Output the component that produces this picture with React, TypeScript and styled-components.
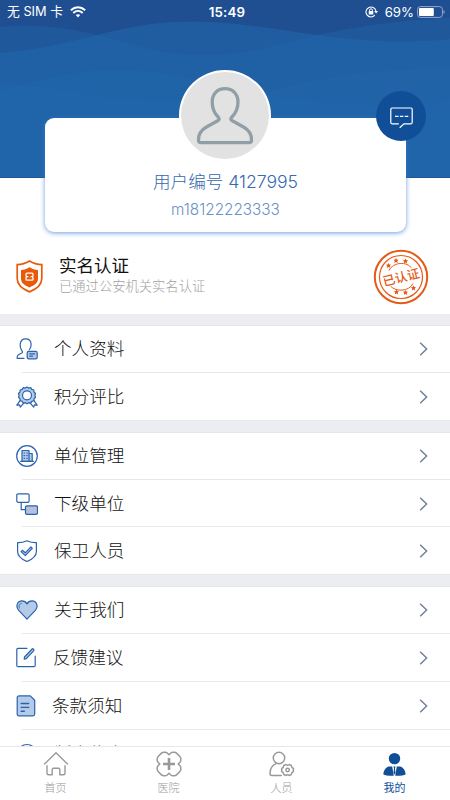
import React from 'react';
import styled, { createGlobalStyle } from 'styled-components';

const GlobalStyle = createGlobalStyle`
  * { box-sizing: border-box; }
  html, body { margin: 0; padding: 0; background: #fff; }
  body {
    font-family: Inter, 'Noto Sans CJK SC', sans-serif;
    font-weight: 300;
    overflow: hidden;
  }
  svg { display: block; flex: none; }
`;

const BLUE = '#2b62ac';
const PALE = '#b3cae9';

const Screen = styled.div`
  width: 450px;
  height: 800px;
  display: flex;
  flex-direction: column;
  background: #fff;
  overflow: hidden;
`;

const Hero = styled.header`
  position: relative;
  height: 237px;
  flex: none;
`;

const Waves = styled.svg`
  position: absolute;
  inset: 0 auto auto 0;
`;

const StatusBar = styled.div`
  position: relative;
  height: 24px;
  padding: 0 5px 0 7px;
  display: grid;
  grid-template-columns: 1fr auto 1fr;
  align-items: center;
  color: #fff;
  font-size: 13px;
  font-weight: 400;
  line-height: 24px;
`;

const StatusSide = styled.div<{ $end?: boolean }>`
  display: flex;
  align-items: center;
  gap: 7px;
  justify-content: ${(p) => (p.$end ? 'flex-end' : 'flex-start')};
`;

const Carrier = styled.span`
  font-size: 12.8px;
  white-space: nowrap;
`;

const Clock = styled.span`
  font-weight: 600;
  font-size: 13.3px;
  letter-spacing: 0.2px;
  padding-left: 2px;
`;

const Percent = styled.span`
  font-size: 13.2px;
  margin-right: -4px;
`;

const ProfileCard = styled.section`
  position: relative;
  width: 361px;
  height: 114px;
  margin: 94px 0 0 45px;
  border-radius: 9px;
  background: #fff;
  box-shadow: 0 1px 5px rgba(55, 125, 215, 0.75);
  display: flex;
  flex-direction: column;
  align-items: center;
  padding-top: 51px;
`;

const Avatar = styled.div`
  position: absolute;
  top: -48px;
  left: 134px;
  width: 92px;
  height: 91px;
  border-radius: 50%;
  border: 2px solid #fff;
  background: #e2e2e2;
`;

const MessageButton = styled.button`
  position: absolute;
  top: -27px;
  left: 331px;
  width: 50px;
  height: 50px;
  padding: 3px 0 0;
  border: 0;
  border-radius: 50%;
  background: #104f97;
  display: flex;
  align-items: center;
  justify-content: center;
`;

const UserNumber = styled.div`
  color: #3569b0;
  font-size: 17.6px;
  font-weight: 300;
  line-height: 26px;
  white-space: nowrap;
`;

const Account = styled.div`
  color: #6a91c8;
  font-size: 15.3px;
  line-height: 22px;
  margin-top: 4px;
`;

const VerifyRow = styled.section`
  height: 77px;
  flex: none;
  display: flex;
  padding: 12px 21px 0 16px;
`;

const VerifyText = styled.div`
  flex: 1;
  padding: 5px 0 0 16px;
`;

const VerifyTitle = styled.div`
  color: #111;
  font-size: 17.5px;
  font-weight: 400;
  line-height: 24px;
`;

const VerifyNote = styled.div`
  color: #a2a2a2;
  font-size: 13.3px;
  line-height: 16px;
`;

const Groups = styled.main`
  flex: 1;
  min-height: 0;
  overflow: hidden;
`;

const Group = styled.section`
  border-top: 11px solid #ecedf2;
  box-shadow: inset 0 1px #e4e5e8;
`;

const Row = styled.div`
  height: 47.87px;
  display: flex;
  align-items: center;
  padding: 0 21px 0 16px;
  background: linear-gradient(#e7e8ea, #e7e8ea) 22px 100% / 100% 1px no-repeat;
  &:last-child { background-position: 0 100%; }
`;

const RowLabel = styled.span<{ $shift: number }>`
  flex: 1;
  margin-left: ${(p) => 16 - p.$shift}px;
  color: #111;
  font-size: 17.6px;
  line-height: 26px;
`;

const TabBar = styled.nav`
  height: 54px;
  flex: none;
  border-top: 1px solid #e8e8e8;
  background: #fff;
  display: grid;
  grid-template-columns: repeat(4, 113px);
`;

const Tab = styled.div<{ $active?: boolean }>`
  display: flex;
  flex-direction: column;
  align-items: center;
  padding: 4px 2px 0 0;
  color: ${(p) => (p.$active ? '#104f97' : '#999')};
  font-size: 11px;
  font-weight: ${(p) => (p.$active ? 400 : 300)};
  line-height: 16px;
  gap: 3px;
`;

const StampText = styled.text`
  font-family: 'Noto Sans CJK SC', sans-serif;
  font-size: 12.5px;
  font-weight: 500;
`;

const Line = ({ children }: { children: React.ReactNode }) => (
  <svg width="22" height="22" viewBox="0 0 22 22" fill="none" stroke={BLUE} strokeWidth="1.2" strokeLinecap="round" strokeLinejoin="round">
    {children}
  </svg>
);

const icons: Record<string, React.ReactNode> = {
  profile: (
    <Line>
      <path d="M8 20.300H1.200C.8 17.500 2.200 16.600 5.800 15c1.500-.8.3-2-.5-3.300C4.300 10 4 8.300 4.200 6.200 4.500 2.900 6.700.8 9.800.8s5.100 2 5.300 5.200c.2 2.300-.4 4.100-1.800 5.600" />
      <rect x="11.200" y="13.300" width="10" height="7.500" rx="1.600" fill={PALE} />
      <path d="M13.800 15.900h4.800M13.800 18.200h2.700" />
    </Line>
  ),
  medal: (
    <Line>
      <path d="M4.400 14.200.8 19.100l2.800-.2.700 2.300 3.500-4.100M17.600 14.200l3.600 4.900-2.800-.2-.7 2.300-3.500-4.100" />
      <path fill={PALE} d="m11 1 1.700 1.100 2-.4 1.100 1.700 2 .6.200 2 1.500 1.500-.6 1.900.6 2-1.500 1.400-.2 2-2 .6-1.100 1.700-2-.4L11 17.800l-1.700-1.100-2 .4-1.100-1.700-2-.6-.2-2-1.500-1.400.6-2-.6-1.900L4 6l.2-2 2-.6 1.100-1.700 2 .4z" />
      <circle cx="11" cy="9.300" r="4.500" fill="#fff" />
    </Line>
  ),
  building: (
    <Line>
      <circle cx="11" cy="11" r="10.300" />
      <path fill={PALE} d="M6 16.300V5.500h7v10.800zM13 8.500h3.200v7.800H13z" />
      <path d="M4.700 16.400h12.700M8 8h.6M10.800 8h.5M8 10.600h.6M10.800 10.600h.5M8 13.300h.6M10.800 13.300h.5" />
    </Line>
  ),
  hierarchy: (
    <Line>
      <rect x=".8" y=".8" width="12.300" height="8.500" rx="1.300" />
      <path d="M5.200 9.400v7.300h4.300" />
      <rect x="9.500" y="12.800" width="12" height="8.500" rx="1.300" fill="#b5c0df" />
    </Line>
  ),
  shield: (
    <Line>
      <path d="M11 .8c2.800 1.300 6 2 9.400 1.900v8.700c0 4.800-3.900 7.700-9.400 10.100-5.500-2.400-9.400-5.300-9.400-10.100V2.700C5 2.800 8.200 2.100 11 .8z" />
      <path d="m6.300 10.300-1.200 1.300 4.200 4 7-7.300-1.400-1.500-5.600 6z" fill={PALE} />
    </Line>
  ),
  heart: (
    <Line>
      <path fill={PALE} d="m11 20.100-8.500-9C-.6 7.400 1.300 1.900 5.800 1.900c2.300 0 4.200 1 5.200 3 1-2 2.900-3 5.200-3 4.500 0 6.400 5.500 3.300 9.200z" />
      <path d="M3.300 9C2.300 6.700 3.400 4.700 5.500 4.200" strokeWidth=".8" />
    </Line>
  ),
  edit: (
    <Line>
      <path d="M11 1.300H2C1.200 1.300.8 1.700.8 2.500v16c0 .8.400 1.200 1.200 1.200h16c.8 0 1.200-.4 1.200-1.200V9.200" />
      <path fill={PALE} d="m8.500 10 7.600-8c.8-.8 2.500.8 1.700 1.700l-7.500 8-2.100.5z" />
    </Line>
  ),
  document: (
    <Line>
      <path fill={PALE} d="M3 .9h11.300l4.400 4.300V19c0 1-.8 1.800-1.800 1.800H3c-1 0-1.800-.8-1.800-1.800V2.700C1.200 1.700 2 .9 3 .9z" />
      <path d="M5.200 8.500h7.500M5.200 12.400h7.500M5.200 16.300h3.100" strokeWidth="1.400" />
    </Line>
  ),
  info: (
    <Line>
      <circle cx="11" cy="11" r="9.500" />
      <path d="M11 5v.5M11 9v7" />
    </Line>
  ),
};

const Chevron = () => (
  <svg width="10" height="14" viewBox="0 0 10 14" fill="none" stroke="#728097" strokeWidth="1.500">
    <path d="m1.200.8 6.400 6.200-6.400 6.200" />
  </svg>
);

const groups = [
  [
    { icon: 'profile', label: '个人资料', shift: 0 },
    { icon: 'medal', label: '积分评比', shift: 0 },
  ],
  [
    { icon: 'building', label: '单位管理', shift: 0 },
    { icon: 'hierarchy', label: '下级单位', shift: 0 },
    { icon: 'shield', label: '保卫人员', shift: 0 },
  ],
  [
    { icon: 'heart', label: '关于我们', shift: 0 },
    { icon: 'edit', label: '反馈建议', shift: 1 },
    { icon: 'document', label: '条款须知', shift: 2 },
    { icon: 'info', label: '版本信息', shift: 0 },
  ],
];

const HeroWaves = () => (
  <Waves width="450" height="178" viewBox="0 0 450 178">
    <path fill="#1f4f91" d="M0 0h450v178H0z" />
    <path fill="#2064a8" fillOpacity=".48" d="M0 27C35 24 65 27 97 35c42 11 65 20 108 20 44 0 73-11 113-20 43-10 88-15 132-17v160H0z" />
    <path fill="#2068ad" fillOpacity=".55" d="M0 53c35-3 62-9 97-18 43-11 75-15 112-13 42 2 75 9 109 13 48 7 89 9 132 4v139H0z" />
    <path fill="#2168ac" fillOpacity=".35" d="M0 84c27 0 68 8 93 12 45 7 89 8 132 3 54-7 100-30 225-31v110H0z" />
    <path fill="#2168ac" fillOpacity=".45" d="M0 92c35-11 72-22 115-22 64 0 97 17 155 25 65 10 118 14 180 5v78H0z" />
    <path fill="#1c5798" d="M0 177h450v1H0z" />
  </Waves>
);

const WifiIcon = () => (
  <svg width="16" height="12" viewBox="0 0 15 11" fill="none" stroke="#fff" strokeWidth="1.900">
    <path d="M.8 3.800c4-3.700 9.400-3.700 13.400 0M3.100 6.400c2.600-2.400 6.200-2.400 8.800 0" />
    <path d="M5.400 8.400c1.200-1 3-1 4.200 0l-2.100 2.300z" fill="#fff" stroke="none" />
  </svg>
);

const LockIcon = () => (
  <svg width="13" height="12" viewBox="0 0 13 12" fill="none" stroke="#fff">
    <path d="M9.800 9.200A5 5 0 1 1 10.900 5" strokeWidth="1.100" />
    <path d="m9.200 5 1.900 2.500L13 5z" fill="#fff" stroke="none" />
    <path d="M4.600 5V4.200a1.400 1.400 0 0 1 2.800 0V5" />
    <rect x="3.700" y="5" width="4.600" height="3.600" rx=".6" fill="#fff" stroke="none" />
  </svg>
);

const BatteryIcon = () => (
  <svg width="28" height="12" viewBox="0 0 28 12">
    <rect x=".6" y=".6" width="24.800" height="10.800" rx="2.700" fill="none" stroke="#91abcf" />
    <rect x="2" y="2" width="14.800" height="8" rx="1" fill="#fff" />
    <path d="M26.500 4v4c1.500-.7 1.500-3.300 0-4z" fill="#91abcf" />
  </svg>
);

const PersonOutline = () => (
  <svg width="88" height="88" viewBox="0 0 88 88" fill="none" stroke="#909fa6" strokeWidth="3.300" strokeLinejoin="round">
    <path d="M37.500 45.500C33 41 31.200 36.500 31.200 30c0-8 5-13.300 12.800-13.300S57 22 57 30c0 6.500-2 11-6.500 15.500-1.200 1.500-.8 2.300.8 3.300l11.200 6.200c5.500 3 8.200 7.500 8 13.500-.1 1.500-.9 2.200-2.300 2.200H19.800c-1.400 0-2.200-.7-2.300-2.200-.2-6 2.500-10.500 8-13.500l11.200-6.200c1.600-1 2-1.800.8-3.300z" />
  </svg>
);

const MessageIcon = () => (
  <svg width="23" height="22" viewBox="0 0 23 22" fill="none" stroke="#fff" strokeWidth="1.200">
    <path d="M8.800 16.800H2c-.8 0-1.200-.4-1.200-1.200V2.200C.8 1.400 1.200 1 2 1h19c.8 0 1.200.4 1.200 1.200v13.400c0 .8-.4 1.200-1.200 1.200h-7l-4.300 4" />
    <path d="M5 9.300h3.500M9.900 9.300h3.500M14.800 9.300h3.500" />
  </svg>
);

const OrangeShield = () => (
  <svg width="27" height="33" viewBox="0 0 27 33">
    <path d="M13.500 1C17 3.300 21 4.600 25.800 4.700v13.900c0 6.500-5 10.400-12.300 13.300C6.200 29 1.200 25.100 1.200 18.600V4.700C6 4.600 10 3.300 13.500 1z" fill="#fff" stroke="#e75b0d" strokeWidth="1.700" />
    <path d="M13.500 7.300c2.600 1.600 5.300 2.500 8.500 2.700v8.700c0 4-3.200 6.400-8.500 8.700C8.200 25.100 5 22.700 5 18.700V10c3.200-.2 5.900-1.100 8.500-2.700z" fill="#e8590a" />
    <path d="M11 13.200h5c.8 0 1 .3 1 1v1.300c0 .7-.3 1.200-1 1.200h-5c-.7 0-1-.5-1-1.200v-1.300c0-.7.200-1 1-1zM11 16.700h5c.7 0 1 .5 1 1.200v1.300c0 .7-.2 1-1 1h-5c-.8 0-1-.3-1-1v-1.300c0-.7.300-1.200 1-1.200z" fill="none" stroke="#fff" strokeWidth="1.300" />
    <path d="M12.300 16.700h2.400" stroke="#e8590a" strokeWidth="1.500" />
  </svg>
);

const STAR = 'm0-2.600.8 1.600 1.800.2L1.300.5l.4 1.900L0 1.500l-1.700.9.400-1.900L-2.600-.8l1.800-.2z';
const starSpots = [[-12.5, -11.5], [-5, -16.5], [4.5, -16], [-4.5, 15], [4.5, 15.5], [12.5, 11]];

const Stamp = () => (
  <svg width="56" height="56" viewBox="-28 -28 56 56" fill="none" stroke="#e45a16">
    <circle r="26.200" strokeWidth="2" />
    <circle r="21.500" strokeWidth="1.200" />
    <path d="M-12-6.500C-8-15 6-16 11-8.500M-11 8.500C-6 15 8 15 12 6.500" strokeWidth="1" />
    <g fill="#e45a16" stroke="none">
      {starSpots.map(([x, y]) => (
        <path key={`${x},${y}`} d={STAR} transform={`translate(${x} ${y})`} />
      ))}
    </g>
    <g transform="rotate(-14)">
      <path d="M-18-6.500h36v13h-36z" fill="#fff" stroke="none" />
      <StampText x="0" y="4.800" textAnchor="middle" fill="#e45a16" stroke="none">已认证</StampText>
    </g>
  </svg>
);

const HomeIcon = () => (
  <svg width="26" height="26" viewBox="0 0 26 26" fill="none" stroke="currentColor" strokeWidth="1.400" strokeLinecap="round" strokeLinejoin="round">
    <path d="M1.500 13 13 1.800 24.500 13M4 14.700v7.500c0 1 .5 1.500 1.500 1.500h3.700v-5.200c0-.8.300-1.200 1.100-1.200h5.400c.8 0 1.100.4 1.100 1.200v5.200h3.700c1 0 1.500-.5 1.500-1.500v-7.500" />
  </svg>
);

const HospitalIcon = () => (
  <svg width="26" height="26" viewBox="0 0 26 26" fill="none" stroke="currentColor" strokeWidth="1.500" strokeLinejoin="round">
    <path d="M13 3.800 14.800 2C15.500 1.300 16 1.200 17 1.200H18C19.200 1.200 20 1.600 20.800 2.400L23.600 5.200C24.400 6 24.800 6.800 24.800 8V9C24.800 10 24.600 10.500 24 11.200L22.200 13 24 14.800C24.600 15.500 24.800 16 24.800 17V18C24.800 19.200 24.400 20 23.600 20.800L20.800 23.600C20 24.400 19.200 24.800 18 24.800H17C16 24.800 15.500 24.700 14.800 24L13 22.200 11.200 24C10.500 24.700 10 24.800 9 24.800H8C6.800 24.800 6 24.400 5.200 23.600L2.400 20.800C1.600 20 1.200 19.200 1.200 18V17C1.200 16 1.400 15.500 2 14.800L3.800 13 2 11.200C1.400 10.500 1.200 10 1.200 9V8C1.200 6.800 1.600 6 2.400 5.200L5.200 2.400C6 1.600 6.800 1.200 8 1.200H9C10 1.200 10.500 1.300 11.200 2z" />
    <path d="M13 7v12M7 13h12" strokeWidth="2.600" />
  </svg>
);

const StaffIcon = () => (
  <svg width="26" height="26" viewBox="0 0 26 26" fill="none" stroke="currentColor" strokeWidth="1.500" strokeLinecap="round" strokeLinejoin="round">
    <circle cx="10" cy="7" r="5.700" />
    <path d="M7 12.600C3.300 14.300 1 18.200 1 22.500c0 1.600.4 2 2 2h9.300" />
    <path d="M16.700 13.500c1 .7 2.700.7 3.700 0l2 1.200c.1 1.400.8 2.300 2 2.800v3c-1.200.5-1.900 1.400-2 2.800l-2 1.200c-1-.7-2.700-.7-3.700 0l-2-1.200c-.1-1.400-.8-2.300-2-2.800v-3c1.200-.5 1.900-1.400 2-2.800z" />
    <circle cx="18.600" cy="19" r="1.700" />
  </svg>
);

const MineIcon = () => (
  <svg width="26" height="26" viewBox="0 0 26 26" fill="currentColor">
    <circle cx="12.500" cy="7.600" r="5.700" />
    <path d="M7 15.500h3.200l1.600 9.300C6.500 24.900 3 24.500 1.300 23.300c.5-4 2.300-7.100 5.700-7.800zM18 15.500h-3.200l-1.600 9.300c5.300.1 8.800-.3 10.500-1.500-.5-4-2.300-7.100-5.700-7.800zM11.400 15.500h2.200l-.6 1.700.4 4.500-.9 2-.9-2 .4-4.500z" />
  </svg>
);

export default function App() {
  return (
    <>
      <GlobalStyle />
      <Screen>
        <Hero>
          <HeroWaves />
          <StatusBar>
            <StatusSide><Carrier>无 SIM 卡</Carrier><WifiIcon /></StatusSide>
            <Clock>15:49</Clock>
            <StatusSide $end><LockIcon /><Percent>69%</Percent><BatteryIcon /></StatusSide>
          </StatusBar>
          <ProfileCard>
            <Avatar><PersonOutline /></Avatar>
            <MessageButton aria-label="消息"><MessageIcon /></MessageButton>
            <UserNumber>用户编号 4127995</UserNumber>
            <Account>m18122223333</Account>
          </ProfileCard>
        </Hero>
        <VerifyRow>
          <svg width="27" height="57" viewBox="0 0 27 57"><g transform="translate(0 11)"><OrangeShield /></g></svg>
          <VerifyText>
            <VerifyTitle>实名认证</VerifyTitle>
            <VerifyNote>已通过公安机关实名认证</VerifyNote>
          </VerifyText>
          <Stamp />
        </VerifyRow>
        <Groups>
          {groups.map((rows) => (
            <Group key={rows[0].icon}>
              {rows.map((row) => (
                <Row key={row.icon}>
                  {icons[row.icon]}
                  <RowLabel $shift={row.shift}>{row.label}</RowLabel>
                  <Chevron />
                </Row>
              ))}
            </Group>
          ))}
        </Groups>
        <TabBar>
          <Tab><HomeIcon />首页</Tab>
          <Tab><HospitalIcon />医院</Tab>
          <Tab><StaffIcon />人员</Tab>
          <Tab $active><MineIcon />我的</Tab>
        </TabBar>
      </Screen>
    </>
  );
}
